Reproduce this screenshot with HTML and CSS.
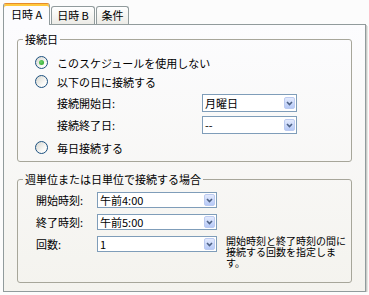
FILE: index.html
```html
<!DOCTYPE html>
<html lang="ja">
<head>
    <meta charset="UTF-8">
    <title>接続のスケジュール</title>
    <link rel="stylesheet" href="styles.css">
</head>
<body>
<div class="tabs">
    <div class="tab tab-a active">日時 A</div>
    <div class="tab tab-b">日時 B</div>
    <div class="tab tab-c">条件</div>
</div>
<div class="panel">
    <fieldset class="group group-days">
        <legend>接続日</legend>
        <div class="option"><span class="radio checked"></span>このスケジュールを使用しない</div>
        <div class="option"><span class="radio"></span>以下の日に接続する</div>
        <div class="field">
            <span class="field-label">接続開始日:</span>
            <div class="combo combo-day">
                <span class="combo-text">月曜日</span>
                <span class="combo-btn"><svg width="7" height="5" viewBox="0 0 7 5"><path d="M1 1l2.5 2.5L6 1" fill="none" stroke="#4d6185" stroke-width="1.6"/></svg></span>
            </div>
        </div>
        <div class="field field-end">
            <span class="field-label">接続終了日:</span>
            <div class="combo combo-day">
                <span class="combo-text">--</span>
                <span class="combo-btn"><svg width="7" height="5" viewBox="0 0 7 5"><path d="M1 1l2.5 2.5L6 1" fill="none" stroke="#4d6185" stroke-width="1.6"/></svg></span>
            </div>
        </div>
        <div class="option option-last"><span class="radio"></span>毎日接続する</div>
    </fieldset>

    <fieldset class="group group-times">
        <legend>週単位または日単位で接続する場合</legend>
        <div class="time-row">
            <span class="time-label">開始時刻:</span>
            <div class="combo combo-time">
                <span class="combo-text">午前4:00</span>
                <span class="combo-btn"><svg width="7" height="5" viewBox="0 0 7 5"><path d="M1 1l2.5 2.5L6 1" fill="none" stroke="#4d6185" stroke-width="1.6"/></svg></span>
            </div>
        </div>
        <div class="time-row">
            <span class="time-label">終了時刻:</span>
            <div class="combo combo-time">
                <span class="combo-text">午前5:00</span>
                <span class="combo-btn"><svg width="7" height="5" viewBox="0 0 7 5"><path d="M1 1l2.5 2.5L6 1" fill="none" stroke="#4d6185" stroke-width="1.6"/></svg></span>
            </div>
        </div>
        <div class="time-row time-row-last">
            <span class="time-label">回数:</span>
            <div class="combo combo-time">
                <span class="combo-text">1</span>
                <span class="combo-btn"><svg width="7" height="5" viewBox="0 0 7 5"><path d="M1 1l2.5 2.5L6 1" fill="none" stroke="#4d6185" stroke-width="1.6"/></svg></span>
            </div>
            <p class="hint">開始時刻と終了時刻の間に接続する回数を指定しま<br>す。</p>
        </div>
    </fieldset>
</div>
</body>
</html>
```

FILE: styles.css
```css
body {
    margin: 0;
    padding: 3px 0 0 3px;
    background-color: #fcfcfc;
    font-family: "Noto Sans CJK JP", sans-serif;
    font-size: 11px;
    color: #000;
}

/* tab strip */
.tabs {
    display: flex;
    align-items: flex-end;
    height: 21px;
}
.tab {
    box-sizing: border-box;
    height: 18px;
    margin-left: 1px;
    border: 1px solid #919b9c;
    border-bottom: none;
    border-radius: 3px 3px 0 0;
    background: linear-gradient(#ffffff, #ecebe6);
    line-height: 16px;
    text-align: center;
}
.tab-a {
    width: 47px;
    margin-left: 0;
}
.tab-b {
    width: 44px;
}
.tab-c {
    width: 33px;
}
.tab.active {
    position: relative;
    z-index: 1;
    height: 22px;
    margin-bottom: -1px;
    border-top: 1px solid #e68b2c;
    box-shadow: inset 0 2px 0 #ffc83c;
    background: #fcfcfe;
    line-height: 20px;
}

/* panel */
.panel {
    box-sizing: border-box;
    width: 363px;
    height: 268px;
    padding: 8px 13px 0 13px;
    border: 1px solid #919b9c;
    background: linear-gradient(#fcfcfe, #f4f3ee);
    box-shadow: 1px 1px 0 #c9cbc8, 2px 2px 0 #e6e6e2;
}

.group {
    margin: 0;
    min-width: 0;
    border: 1px solid #a7a69a;
    border-radius: 3px;
}
.group legend {
    padding: 0 2px;
    line-height: 13px;
}
.group-days {
    padding: 7px 16px 4px 17px;
}
.group-days legend {
    margin-left: -12px;
}
.group-times {
    margin-top: 11px;
    padding: 6px 1px 14px 18px;
}
.group-times legend {
    margin-left: -13px;
}

/* radio options */
.option {
    display: flex;
    align-items: center;
    height: 19px;
}
.option-last {
    margin-top: 4px;
}
.radio {
    position: relative;
    box-sizing: border-box;
    width: 13px;
    height: 13px;
    margin-right: 9px;
    border: 1px solid #1c5180;
    border-radius: 50%;
    background: linear-gradient(135deg, #d6d6cf, #fbfbf9 70%);
}
.radio.checked::after {
    content: "";
    position: absolute;
    left: 3px;
    top: 3px;
    width: 5px;
    height: 5px;
    border-radius: 50%;
    background: radial-gradient(circle at 40% 40%, #6fd36f, #21a121);
}

/* day fields */
.field {
    display: flex;
    align-items: center;
    height: 18px;
    margin-top: 3px;
}
.field-end {
    margin-top: 4px;
}
.field-label {
    box-sizing: border-box;
    flex-shrink: 0;
    width: 167px;
    padding-left: 22px;
}

/* combo boxes */
.combo {
    box-sizing: border-box;
    display: flex;
    flex-shrink: 0;
    align-items: center;
    height: 18px;
    padding: 0 1px 0 2px;
    border: 1px solid #7f9db9;
    background-color: #fff;
}
.combo-day {
    width: 95px;
}
.combo-time {
    width: 120px;
    height: 16px;
}
.combo-text {
    flex: 1;
    white-space: nowrap;
}
.combo-btn {
    box-sizing: border-box;
    display: flex;
    align-items: center;
    justify-content: center;
    width: 11px;
    height: 12px;
    border: 1px solid #bccbf0;
    border-radius: 2px;
    background: linear-gradient(#e3eafd, #b6c9f7);
}

/* time rows */
.time-row {
    display: flex;
    align-items: center;
    margin-top: 6px;
}
.time-row:first-of-type {
    margin-top: 0;
}
.time-row-last {
    align-items: flex-start;
}
.time-label {
    flex-shrink: 0;
    width: 61px;
    line-height: 16px;
}
.hint {
    width: 124px;
    margin: -1px 0 0 9px;
    font-size: 10px;
    line-height: 11px;
}
```
